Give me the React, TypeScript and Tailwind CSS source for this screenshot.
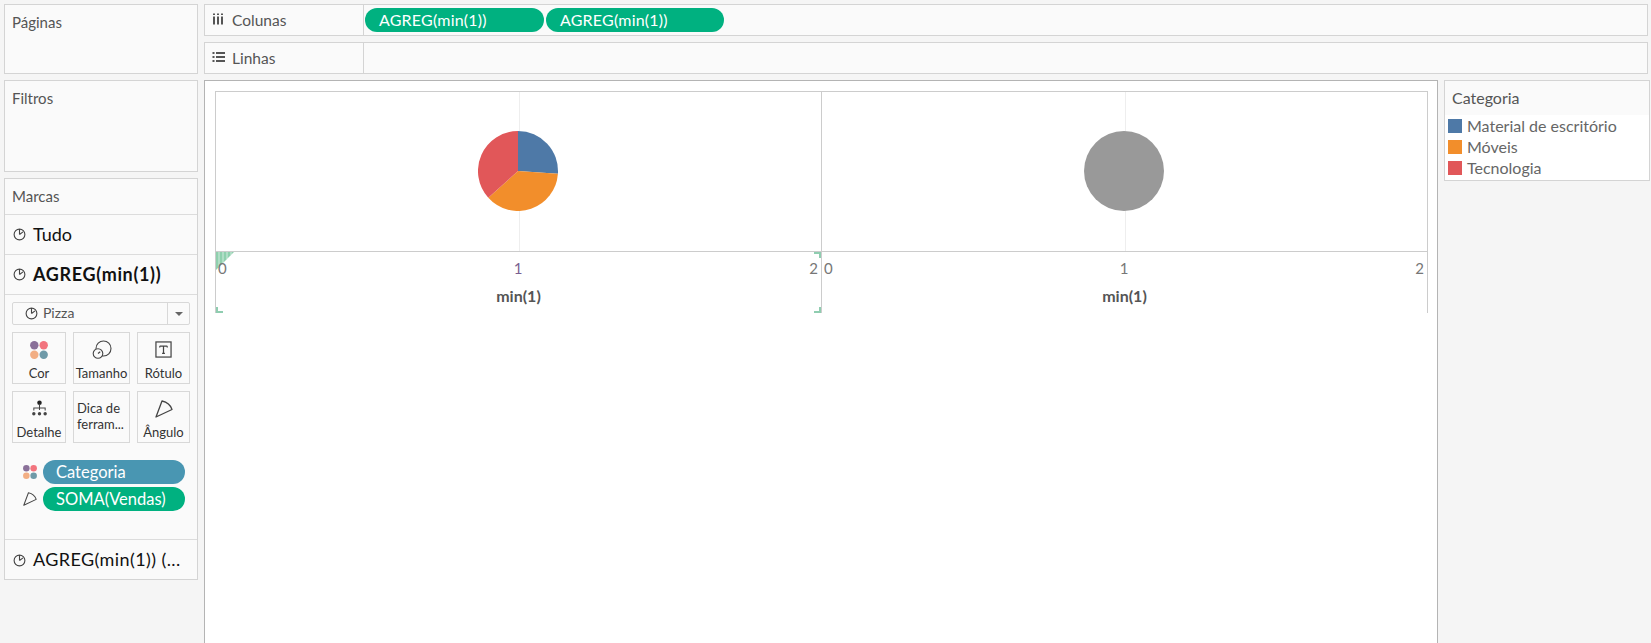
import React from "react";

const font = { fontFamily: 'Lato, "Open Sans", sans-serif' };

function PieIcon() {
  return (
    <svg viewBox="0 0 14 14" width="13" height="13" className="shrink-0" fill="none" stroke="#444" strokeWidth="1.2">
      <circle cx="7" cy="7" r="5.8" />
      <path d="M7 7V1.200M7 7l3.800-2.800" />
    </svg>
  );
}

function Dots({ size = 18 }: { size?: number }) {
  return (
    <svg viewBox="0 0 18 18" width={size} height={size} className="shrink-0">
      <circle cx="4.300" cy="4.300" r="4.200" fill="#8a7099" />
      <circle cx="13.700" cy="4.300" r="4.200" fill="#f2747e" />
      <circle cx="4.300" cy="13.700" r="4.200" fill="#f2ae84" />
      <circle cx="13.700" cy="13.700" r="4.200" fill="#6f9aa8" />
    </svg>
  );
}

function AngleIcon({ size = 18 }: { size?: number }) {
  return (
    <svg viewBox="0 0 18 18" width={size} height={size} className="shrink-0" fill="none" stroke="#444" strokeWidth="1.300" strokeLinejoin="round">
      <path d="M1 17 7 1c4.500 1 8.500 4 10 8.500z" />
    </svg>
  );
}

function MarkRow({ label, bold }: { label: string; bold?: boolean }) {
  return (
    <div className="h-10 flex items-center pl-2 gap-[7px] border-b border-[#dcdcdc]">
      <PieIcon />
      <span className={`text-[18px] leading-[24px] mb-[2px] text-[#111] ${bold ? "font-bold tracking-[0.65px]" : ""}`}>{label}</span>
    </div>
  );
}

function MarkButton({ w, label, icon, two }: { w: string; label?: string; icon?: React.ReactNode; two?: boolean }) {
  return (
    <div className={`${w} h-full border border-[#d8d8d8] flex flex-col items-center text-[13px] leading-[16px] text-[#333]`}>
      {two ? (
        <div className="mt-[8px] w-full whitespace-nowrap pl-[3px]">
          Dica de
          <br />
          ferram...
        </div>
      ) : (
        <>
          <div className="mt-[1px] h-[31px] flex items-center justify-center">{icon}</div>
          <div className="whitespace-nowrap">{label}</div>
        </>
      )}
    </div>
  );
}

function Corner({ className }: { className: string }) {
  return <div className={`absolute w-[7px] h-[6px] border-[#8fcdb0] ${className}`} />;
}

function ChartPane({ pie, left }: { pie: React.ReactNode; left?: boolean }) {
  return (
    <div className={`flex-1 flex flex-col ${left ? "border-r border-[#cccccc]" : ""}`}>
      <div className="h-[160px] flex items-center justify-center border-b border-[#cccccc] relative">
        <div className="absolute left-1/2 top-0 bottom-0 w-[1px] bg-[#eeeeee]" />
        <div className="relative mr-[2px] mb-[2px]">{pie}</div>
      </div>
      <div className="h-[61px] relative">
        {left && (
          <>
            <div className="absolute left-0 top-0 w-[18px] h-[18px]">
              <svg viewBox="0 0 18 18" width="18" height="18" className="block">
                <path d="M0 0h18L0 18z" fill="#8fd0ae" />
                <path d="M3 0v15M7 0v11M11 0v7M15 0v3" stroke="#ffffff" strokeWidth="1" opacity="0.6" />
              </svg>
            </div>
            <Corner className="left-0 bottom-0 border-l-2 border-b-2" />
            <Corner className="right-0 top-0 border-r-2 border-t-2" />
            <Corner className="right-0 bottom-0 border-r-2 border-b-2" />
          </>
        )}
        <div className="relative flex justify-between pl-[2px] pr-[3px] pt-[6px] text-[15px] leading-[20px] text-[#777]">
          <span>0</span>
          <span className={left ? "text-[#7a5f90]" : ""}>1</span>
          <span>2</span>
        </div>
        <div className="text-center text-[16px] font-bold leading-[20px] text-[#555] mt-[8px]">min(1)</div>
      </div>
    </div>
  );
}

const Pill = ({ w }: { w: string }) => (
  <div className={`${w} h-6 rounded-full bg-[#00b180] text-white text-[16px] tracking-[0.2px] leading-6 pl-[14px]`}>AGREG(min(1))</div>
);

export default function App() {
  return (
    <div style={font} className="w-[1651px] h-[643px] overflow-hidden bg-[#f5f5f5] text-[#555] flex flex-col">
      <div className="flex flex-1 pt-1 pl-1 min-h-0 gap-[6px]">
        <div className="w-[194px] flex flex-col gap-[6px] shrink-0">
          <div className="h-[70px] border border-[#d4d4d4] bg-[#fafafa] pl-[7px] pt-[7px] text-[15px] leading-[20px]">Páginas</div>
          <div className="h-[92px] border border-[#d4d4d4] bg-[#fafafa] pl-[7px] pt-[7px] text-[15px] leading-[20px]">Filtros</div>
          <div className="border border-[#d4d4d4] bg-[#fafafa] h-[402px]">
            <div className="h-[36px] pl-[7px] pt-[7px] text-[15px] leading-[20px] border-b border-[#dcdcdc]">Marcas</div>
            <MarkRow label="Tudo" />
            <MarkRow label="AGREG(min(1))" bold />
            <div className="px-[7px] pt-[7px] h-[245px] border-b border-[#dcdcdc]">
              <div className="h-[23px] border border-[#d8d8d8] rounded-[2px] flex items-center text-[14px] text-[#555]">
                <div className="flex-1 flex items-center gap-[5px] pl-[12px] border-r border-[#d8d8d8] h-full">
                  <PieIcon />
                  <span className="mb-[2px]">Pizza</span>
                </div>
                <div className="w-[21px] flex justify-center">
                  <div className="w-0 h-0 border-l-[4px] border-r-[4px] border-t-[4px] border-l-transparent border-r-transparent border-t-[#666]" />
                </div>
              </div>
              <div className="mt-[7px] flex justify-between h-[52px]">
                <MarkButton w="w-[54px]" label="Cor" icon={<Dots size={18} />} />
                <MarkButton
                  w="w-[57px]"
                  label="Tamanho"
                  icon={
                    <svg viewBox="0 0 20 20" width="20" height="20" fill="none" stroke="#444" strokeWidth="1.100">
                      <circle cx="11.500" cy="8.500" r="7.500" />
                      <circle cx="6" cy="13.500" r="4.800" fill="#fafafa" />
                      <path d="M6 13.500l2.200-1.800" />
                    </svg>
                  }
                />
                <MarkButton
                  w="w-[53px]"
                  label="Rótulo"
                  icon={
                    <svg viewBox="0 0 18 18" width="17" height="17" fill="none" stroke="#444" strokeWidth="1.300">
                      <rect x="1" y="1" width="16" height="16" />
                      <path d="M5 5.500h8M9 5.500v7.500M7.500 13h3M5 5.500v1.500M13 5.500v1.500" />
                    </svg>
                  }
                />
              </div>
              <div className="mt-[7px] flex justify-between h-[52px]">
                <MarkButton
                  w="w-[54px]"
                  label="Detalhe"
                  icon={
                    <svg viewBox="0 0 18 18" width="17" height="17" fill="none" stroke="#444" strokeWidth="1.100">
                      <circle cx="9" cy="3" r="2.400" fill="#222" stroke="none" />
                      <path d="M9 4v6.500M3 11V8.500h12V11" />
                      <circle cx="3" cy="14.500" r="1.800" fill="#444" stroke="none" />
                      <circle cx="9" cy="14.500" r="1.800" fill="#444" stroke="none" />
                      <circle cx="15" cy="14.500" r="1.800" fill="#444" stroke="none" />
                    </svg>
                  }
                />
                <MarkButton w="w-[57px]" two />
                <MarkButton w="w-[53px]" label="Ângulo" icon={<AngleIcon />} />
              </div>
              <div className="mt-[17px] pl-[11px] pr-[5px] flex flex-col gap-[3px]">
                <div className="flex items-center gap-[6px]">
                  <Dots size={14} />
                  <div className="flex-1 h-6 rounded-full bg-[#4996b2] text-white text-[16.500px] leading-6 pl-[13px]">Categoria</div>
                </div>
                <div className="flex items-center gap-[6px]">
                  <AngleIcon size={14} />
                  <div className="flex-1 h-6 rounded-full bg-[#00b180] text-white text-[16.500px] leading-6 pl-[13px]">SOMA(Vendas)</div>
                </div>
              </div>
            </div>
            <div className="h-10 flex items-center pl-2 gap-[7px]">
              <PieIcon />
              <span className="text-[18px] tracking-[0.4px] leading-[24px] mb-[2px] text-[#111] whitespace-nowrap">AGREG(min(1)) (...</span>
            </div>
          </div>
        </div>
        <div className="flex-1 flex flex-col gap-[6px] min-w-0">
          <div className="h-[32px] mr-[3px] border border-[#d4d4d4] bg-[#fafafa] flex">
            <div className="w-[159px] border-r border-[#d4d4d4] flex items-center pl-[8px] gap-[8px] text-[15.500px]">
              <svg viewBox="0 0 11 12" width="11" height="12" fill="#555" className="mb-[3px]">
                <rect x="0" y="3.500" width="2" height="8" />
                <rect x="4" y="3.500" width="2" height="8" />
                <rect x="8" y="3.500" width="2" height="8" />
                <rect x="0" y="0.500" width="2" height="1.500" />
                <rect x="4" y="0.500" width="2" height="1.500" />
                <rect x="8" y="0.500" width="2" height="1.500" />
              </svg>
              <span className="mt-[2px]">Colunas</span>
            </div>
            <div className="flex items-center pl-[1px] gap-[2px]">
              <Pill w="w-[179px]" />
              <Pill w="w-[178px]" />
            </div>
          </div>
          <div className="h-[32px] mr-[3px] border border-[#d4d4d4] bg-[#fafafa] flex">
            <div className="w-[159px] border-r border-[#d4d4d4] flex items-center pl-[7px] gap-[7px] text-[15.500px]">
              <svg viewBox="0 0 13 12" width="13" height="12" fill="#555" className="mb-[3px]">
                <rect x="0.500" y="1" width="2" height="2" />
                <rect x="0.500" y="5" width="2" height="2" />
                <rect x="0.500" y="9" width="2" height="2" />
                <rect x="4" y="1" width="9" height="2" />
                <rect x="4" y="5" width="9" height="2" />
                <rect x="4" y="9" width="9" height="2" />
              </svg>
              <span className="mt-[2px]">Linhas</span>
            </div>
          </div>
          <div className="flex-1 flex gap-[6px] min-h-0">
            <div className="w-[1234px] bg-white border border-b-0 border-[#b4b4b4] pl-[10px] pr-[9px] pt-[10px]">
              <div className="border-t border-l border-r border-[#cccccc] flex h-[222px]">
                <ChartPane
                  left
                  pie={
                    <svg viewBox="-40 -40 80 80" width="80" height="80" className="block">
                      <path d="M0 0L0 -40A40 40 0 0 1 39.900 2.700z" fill="#4e79a7" />
                      <path d="M0 0L39.900 2.700A40 40 0 0 1 -29.700 26.800z" fill="#f28e2b" />
                      <path d="M0 0L-29.700 26.800A40 40 0 0 1 0 -40z" fill="#e15759" />
                    </svg>
                  }
                />
                <ChartPane
                  pie={
                    <svg viewBox="-40 -40 80 80" width="80" height="80" className="block">
                      <circle r="40" fill="#999999" />
                    </svg>
                  }
                />
              </div>
            </div>
            <div className="w-[206px] h-[101px] border border-[#d4d4d4] bg-white">
              <div className="h-[34px] bg-[#fafafa] pl-[7px] pt-[7px] text-[16px] leading-[20px]">Categoria</div>
              {[
                ["Material de escritório", "#4e79a7"],
                ["Móveis", "#f28e2b"],
                ["Tecnologia", "#e15759"],
              ].map(([t, c]) => (
                <div key={t} className="h-[21px] flex items-center gap-[5px] pl-[3px] text-[16px] text-[#666]">
                  <div className="w-[14px] h-[14px]" style={{ backgroundColor: c }} />
                  {t}
                </div>
              ))}
            </div>
          </div>
        </div>
      </div>
    </div>
  );
}
